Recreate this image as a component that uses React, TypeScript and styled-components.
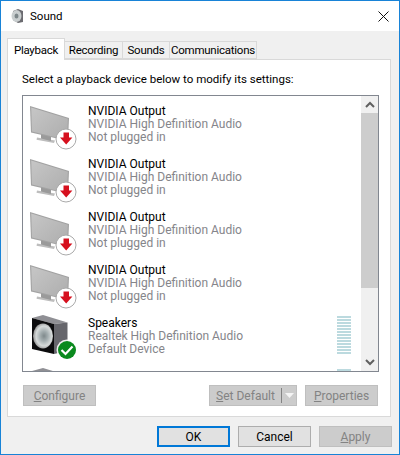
import React from "react";
import styled, { createGlobalStyle } from "styled-components";

const Global = createGlobalStyle`
  html, body { margin: 0; padding: 0; background: #f0f0f0; }
  * { box-sizing: border-box; }
`;

const Window = styled.div`
  width: 400px;
  height: 455px;
  border: 1px solid #1883d7;
  background: #f0f0f0;
  display: flex;
  flex-direction: column;
  font-family: Roboto, "Noto Sans", sans-serif;
  font-size: 12px;
  color: #000;
  overflow: hidden;
`;

const TitleBar = styled.header`
  height: 30px;
  background: #fff;
  display: flex;
  align-items: center;
  padding: 0 10px 0 9px;
  gap: 5px;
  flex: none;
`;

const TitleText = styled.span`
  flex: 1;
  font-size: 11.5px;
`;

const Tabs = styled.nav`
  display: flex;
  align-items: flex-end;
  height: 22px;
  margin: 6px 0 0 6px;
  flex: none;
  position: relative;
  z-index: 1;
`;

const Tab = styled.div<{ $w: number; $active?: boolean }>`
  width: ${(p) => p.$w}px;
  height: ${(p) => (p.$active ? 22 : 18)}px;
  margin-bottom: ${(p) => (p.$active ? -1 : 0)}px;
  background: ${(p) => (p.$active ? "#fff" : "#f0f0f0")};
  border: 1px solid #d9d9d9;
  border-bottom: ${(p) => (p.$active ? "none" : "1px solid #d9d9d9")};
  border-left: ${(p) => (p.$active ? "1px solid #d9d9d9" : "none")};
  display: flex;
  align-items: center;
  justify-content: center;
  white-space: nowrap;
  font-size: 11.5px;
  letter-spacing: -0.25px;
`;

const Panel = styled.section`
  width: 384px;
  height: 358px;
  margin: 0 0 0 6px;
  background: #fff;
  border: 1px solid #d9d9d9;
  padding: 0 11px 10px 14px;
  display: flex;
  flex-direction: column;
  flex: none;
`;

const Prompt = styled.div`
  height: 35px;
  line-height: 38px;
  font-size: 11.5px;
  white-space: nowrap;
  flex: none;
`;

const ListBox = styled.div`
  height: 277px;
  width: 357px;
  border: 1px solid #828790;
  display: flex;
  flex: none;
  overflow: hidden;
`;

const Rows = styled.div`
  flex: 1;
  padding-top: 2px;
  overflow: hidden;
  height: 100%;
`;

const Row = styled.div`
  height: 53px;
  display: flex;
  padding-left: 5px;
  align-items: flex-start;
`;

const IconSlot = styled.svg`
  width: 50px;
  height: 50px;
  margin-top: 5px;
  flex: none;
  filter: blur(0.25px);
`;

const RowText = styled.div`
  margin-left: 10px;
  padding-top: 7px;
  flex: 1;
  line-height: 13px;
`;

const Line = styled.div<{ $muted?: boolean }>`
  height: 13px;
  white-space: nowrap;
  color: ${(p) => (p.$muted ? "#85858a" : "#000")};
`;

const Meter = styled.div`
  width: 14px;
  margin: 6px 10px 0 0;
  display: flex;
  flex-direction: column;
  gap: 1px;
  flex: none;
`;

const MeterBar = styled.div`
  height: 2px;
  background: #bcdadf;
`;

const Scrollbar = styled.div`
  width: 17px;
  background: #f0f0f0;
  display: flex;
  flex-direction: column;
  flex: none;
`;

const ScrollButton = styled.div`
  height: 17px;
  display: flex;
  align-items: center;
  justify-content: center;
  flex: none;
`;

const ScrollTrack = styled.div`
  flex: 1;
`;

const Thumb = styled.div`
  height: 175px;
  background: #cdcdcd;
`;

const ButtonRow = styled.div`
  display: flex;
  margin-top: 13px;
  width: 355px;
  margin-left: 1px;
  flex: none;
`;

const Spacer = styled.div`
  flex: 1;
`;

const DialogButton = styled.div<{ $disabled?: boolean; $primary?: boolean; $w?: number }>`
  width: ${(p) => p.$w ?? 73}px;
  height: 21px;
  display: flex;
  align-items: center;
  justify-content: center;
  color: ${(p) => (p.$disabled ? "#838383" : "#000")};
  background: ${(p) => (p.$disabled ? "#cccccc" : "#e1e1e1")};
  border: ${(p) =>
    p.$primary ? "2px solid #0078d7" : p.$disabled ? "1px solid #bfbfbf" : "1px solid #adadad"};
  white-space: nowrap;
  flex: none;
`;

const SplitLabel = styled.span`
  flex: 1;
  text-align: center;
`;

const SplitArrow = styled.span`
  width: 15px;
  height: 15px;
  border-left: 1px solid #838383;
  display: flex;
  align-items: center;
  justify-content: center;
  flex: none;
`;

const GapFixed = styled.div`
  width: 8px;
  flex: none;
`;

const Footer = styled.footer`
  display: flex;
  justify-content: flex-end;
  gap: 8px;
  padding-right: 7px;
  margin-top: 9px;
  flex: none;
`;

const Monitor = () => (
  <IconSlot viewBox="0 0 50 50">
    <defs>
      <linearGradient id="scr" x1="0" y1="0" x2="1" y2="1">
        <stop offset="0" stopColor="#c6c6c6" />
        <stop offset="1" stopColor="#adadad" />
      </linearGradient>
    </defs>
    <polygon points="9,34.5 27,37.5 26,40 8.5,36.8" fill="#bdbdbd" />
    <polygon points="13,30 23,32 23,38 13,35.5" fill="#9a9a9a" />
    <polygon points="2,3 41,15 40,38 3,29.5" fill="#a2a2a2" />
    <polygon points="3.2,4.6 39.8,15.8 39,37 4,28.5" fill="url(#scr)" />
    <circle cx="38" cy="36" r="10" fill="#fff" stroke="#a9a9a9" strokeWidth="1" />
    <path d="M35.5 29.5h5.5v5h3.4L38.2 41.5 32 34.5h3.5z" fill="#d6101e" />
  </IconSlot>
);

const Speaker = ({ badge }: { badge?: boolean }) => (
  <IconSlot viewBox="0 0 50 50">
    <defs>
      <radialGradient id="cone" cx="0.55" cy="0.5" r="0.55">
        <stop offset="0" stopColor="#7f898b" />
        <stop offset="0.35" stopColor="#a3adaf" />
        <stop offset="0.72" stopColor="#d6dada" />
        <stop offset="1" stopColor="#8e8e8e" />
      </radialGradient>
    </defs>
    <polygon points="4,3 15,0 39.5,7.5 26,9" fill="#8f8f94" />
    <polygon points="26,9 39.5,7.5 39.5,36 26,39" fill="#66666c" />
    <polygon points="4,3 26,9 26,39 4,34" fill="#0b0b0d" />
    <ellipse cx="15" cy="21" rx="10" ry="12.5" fill="url(#cone)" />
    {badge && (
      <>
        <circle cx="39" cy="35" r="10.5" fill="#fff" fillOpacity="0.9" />
        <circle cx="39" cy="35" r="9" fill="#0a8a1e" />
        <path d="M33.5 35l4 4 7-7.5" fill="none" stroke="#fff" strokeWidth="2.2" />
      </>
    )}
  </IconSlot>
);

const LevelMeter = () => (
  <Meter>
    {Array.from({ length: 13 }, (_, i) => (
      <MeterBar key={i} />
    ))}
  </Meter>
);

const MonitorRow = () => (
  <Row>
    <Monitor />
    <RowText>
      <Line>NVIDIA Output</Line>
      <Line $muted>NVIDIA High Definition Audio</Line>
      <Line $muted>Not plugged in</Line>
    </RowText>
  </Row>
);

export default function App() {
  return (
    <Window>
      <Global />
      <TitleBar>
        <svg width="15" height="16" viewBox="0 0 15 16">
          <polygon points="3,3 8,1 13,3 13,14 8,15 3,12" fill="#6b6b70" />
          <ellipse cx="6.5" cy="8" rx="5" ry="6" fill="#c9cecf" />
          <ellipse cx="6.5" cy="8" rx="2" ry="2.6" fill="#7d878a" />
        </svg>
        <TitleText>Sound</TitleText>
        <svg width="11" height="11" viewBox="0 0 11 11">
          <path d="M.5.5l10 10M10.5.5l-10 10" stroke="#111" strokeWidth="1" fill="none" />
        </svg>
      </TitleBar>
      <Tabs>
        <Tab $w={58} $active>Playback</Tab>
        <Tab $w={58}>Recording</Tab>
        <Tab $w={47}>Sounds</Tab>
        <Tab $w={87}>Communications</Tab>
      </Tabs>
      <Panel>
        <Prompt>Select a playback device below to modify its settings:</Prompt>
        <ListBox>
          <Rows>
            <MonitorRow />
            <MonitorRow />
            <MonitorRow />
            <MonitorRow />
            <Row>
              <Speaker badge />
              <RowText>
                <Line>Speakers</Line>
                <Line $muted>Realtek High Definition Audio</Line>
                <Line $muted>Default Device</Line>
              </RowText>
              <LevelMeter />
            </Row>
            <Row>
              <Speaker />
              <RowText />
              <LevelMeter />
            </Row>
          </Rows>
          <Scrollbar>
            <ScrollButton>
              <svg width="10" height="7" viewBox="0 0 10 7">
                <path d="M1 6l4-4 4 4" fill="none" stroke="#606060" strokeWidth="2" />
              </svg>
            </ScrollButton>
            <ScrollTrack>
              <Thumb />
            </ScrollTrack>
            <ScrollButton>
              <svg width="10" height="7" viewBox="0 0 10 7">
                <path d="M1 1l4 4 4-4" fill="none" stroke="#606060" strokeWidth="2" />
              </svg>
            </ScrollButton>
          </Scrollbar>
        </ListBox>
        <ButtonRow>
          <DialogButton $disabled><span><u>C</u>onfigure</span></DialogButton>
          <Spacer />
          <DialogButton $disabled $w={88}>
            <SplitLabel><u>S</u>et Default</SplitLabel>
            <SplitArrow>
              <svg width="9" height="5" viewBox="0 0 9 5">
                <polygon points="0,0 9,0 4.5,5" fill="#f4f4f4" />
              </svg>
            </SplitArrow>
          </DialogButton>
          <GapFixed />
          <DialogButton $disabled><span><u>P</u>roperties</span></DialogButton>
        </ButtonRow>
      </Panel>
      <Footer>
        <DialogButton $primary>OK</DialogButton>
        <DialogButton>Cancel</DialogButton>
        <DialogButton $disabled><span><u>A</u>pply</span></DialogButton>
      </Footer>
    </Window>
  );
}
